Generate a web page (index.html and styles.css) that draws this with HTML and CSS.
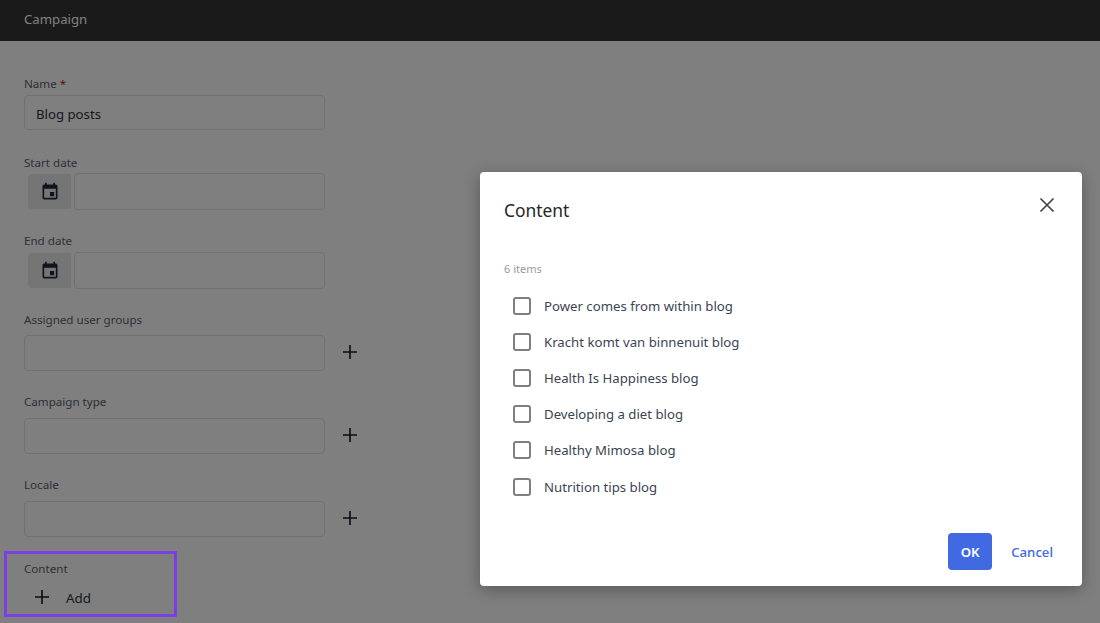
FILE: index.html
```html
<!DOCTYPE html>
<html lang="en">
<head>
<meta charset="utf-8">
<title>Campaign</title>
<link rel="stylesheet" href="styles.css">
</head>
<body>
<header class="topbar">Campaign</header>
<main class="form">
  <div class="field field-name">
    <label class="label">Name <span class="req">*</span></label>
    <div class="input input-name">Blog posts</div>
  </div>
  <div class="field field-date">
    <label class="label">Start date</label>
    <div class="date-row">
      <span class="date-btn"><svg width="20" height="20" viewBox="0 0 24 24"><path fill="#1f2a3a" d="M17 12h-5v5h5v-5zM16 1v2H8V1H6v2H5c-1.11 0-2 .9-2 2v14a2 2 0 0 0 2 2h14a2 2 0 0 0 2-2V5a2 2 0 0 0-2-2h-1V1h-2zm3 18H5V8h14v11z"/></svg></span>
      <div class="input input-date"></div>
    </div>
  </div>
  <div class="field field-date">
    <label class="label">End date</label>
    <div class="date-row">
      <span class="date-btn"><svg width="20" height="20" viewBox="0 0 24 24"><path fill="#1f2a3a" d="M17 12h-5v5h5v-5zM16 1v2H8V1H6v2H5c-1.11 0-2 .9-2 2v14a2 2 0 0 0 2 2h14a2 2 0 0 0 2-2V5a2 2 0 0 0-2-2h-1V1h-2zm3 18H5V8h14v11z"/></svg></span>
      <div class="input input-date"></div>
    </div>
  </div>
  <div class="field field-plus">
    <label class="label">Assigned user groups</label>
    <div class="plus-row">
      <div class="input input-plus"></div>
      <svg class="plus" width="16" height="16" viewBox="0 0 16 16"><path d="M8 1v14M1 8h14" stroke="#111a28" stroke-width="1.6" fill="none"/></svg>
    </div>
  </div>
  <div class="field field-plus">
    <label class="label">Campaign type</label>
    <div class="plus-row">
      <div class="input input-plus"></div>
      <svg class="plus" width="16" height="16" viewBox="0 0 16 16"><path d="M8 1v14M1 8h14" stroke="#111a28" stroke-width="1.6" fill="none"/></svg>
    </div>
  </div>
  <div class="field field-plus">
    <label class="label">Locale</label>
    <div class="plus-row">
      <div class="input input-plus"></div>
      <svg class="plus" width="16" height="16" viewBox="0 0 16 16"><path d="M8 1v14M1 8h14" stroke="#111a28" stroke-width="1.6" fill="none"/></svg>
    </div>
  </div>
  <div class="field field-content">
    <label class="label">Content</label>
    <div class="add-row">
      <svg width="16" height="16" viewBox="0 0 16 16"><path d="M8 1v14M1 8h14" stroke="#111a28" stroke-width="1.6" fill="none"/></svg>
      <span class="add-text">Add</span>
    </div>
  </div>
</main>

<div class="overlay"></div>
<div class="highlight"></div>

<section class="dialog">
  <div class="dialog-head">
    <h2 class="dialog-title">Content</h2>
    <svg class="close" width="16" height="16" viewBox="0 0 16 16"><path d="M1.5 1.5l13 13M14.5 1.5l-13 13" stroke="#444" stroke-width="1.7" fill="none"/></svg>
  </div>
  <p class="count">6 items</p>
  <ul class="list">
    <li class="item"><span class="box"></span>Power comes from within blog</li>
    <li class="item"><span class="box"></span>Kracht komt van binnenuit blog</li>
    <li class="item"><span class="box"></span>Health Is Happiness blog</li>
    <li class="item"><span class="box"></span>Developing a diet blog</li>
    <li class="item"><span class="box"></span>Healthy Mimosa blog</li>
    <li class="item"><span class="box"></span>Nutrition tips blog</li>
  </ul>
  <div class="actions">
    <button class="ok">OK</button>
    <button class="cancel">Cancel</button>
  </div>
</section>
</body>
</html>
```
FILE: styles.css
```css
* { box-sizing: border-box; }
html, body { height: 100%; }
body {
  margin: 0;
  height: 623px;
  overflow: hidden;
  background: #fff;
  font-family: "Noto Sans", "Open Sans", sans-serif;
  color: #2a3342;
  position: relative;
}
.topbar {
  height: 41px;
  background: #343434;
  color: #fff;
  font-size: 13.2px;
  line-height: 39px;
  padding-left: 24px;
}
.form { padding: 34px 0 0 24px; }
.label {
  display: block;
  font-size: 11.6px;
  line-height: 18px;
  color: #5a6270;
}
.req { color: #c62828; }
.input {
  width: 301px;
  border: 1px solid #e2e2e2;
  border-radius: 4px;
  background: #fff;
}
.field-name .input { margin-top: 2px; }
.input-name {
  height: 35px;
  font-size: 13.2px;
  line-height: 35px;
  padding: 1px 0 0 11px;
  color: #2a3342;
}
.field-date { margin-top: 22px; }
.field-name + .field-date { margin-top: 24px; }
.date-row { display: flex; padding-left: 4px; height: 37px; margin-top: 1px; }
.field-date + .field-date .date-row { margin-top: 2px; }
.date-btn {
  width: 43px;
  height: 35px;
  margin-top: 1px;
  background: #ebebeb;
  border-radius: 4px 0 0 4px;
  display: flex;
  align-items: center;
  justify-content: center;
}
.input-date { width: 251px; margin-left: 3px; height: 37px; }
.field-plus { margin-top: 22px; }
.plus-row { display: flex; align-items: center; margin-top: 7px; }
.field-date + .field-plus .plus-row { margin-top: 6px; }
.input-plus { height: 36px; }
.plus { margin-left: 17px; margin-bottom: 2px; }
.field-content { margin-top: 23px; }
.add-row {
  display: flex;
  align-items: center;
  padding-left: 10px;
  margin-top: 7px;
  height: 24px;
}
.add-text { margin-left: 16px; padding-top: 2px; font-size: 13.4px; }
.overlay {
  position: absolute;
  inset: 0;
  background: rgba(0, 0, 0, 0.5);
}
.highlight {
  position: absolute;
  left: 4px;
  top: 551px;
  width: 173px;
  height: 66px;
  border: 3px solid #7b3fe4;
}
.dialog {
  position: absolute;
  left: 480px;
  top: 172px;
  width: 602px;
  height: 414px;
  background: #fff;
  border-radius: 4px;
  box-shadow: 0 4px 16px rgba(0, 0, 0, 0.3);
  padding: 0 24px;
}
.dialog-head {
  display: flex;
  justify-content: space-between;
  align-items: flex-start;
  padding-top: 25px;
}
.dialog-title {
  margin: 0;
  font-size: 17.4px;
  line-height: 26px;
  font-weight: 400;
  color: #262626;
}
.close { margin: 0 3px 0 0; }
.count {
  margin: 38px 0 0;
  font-size: 11px;
  line-height: 16px;
  color: #999;
}
.list { list-style: none; margin: 11px 0 0; padding: 0 0 0 9px; }
.item {
  display: flex;
  align-items: center;
  height: 36.1px;
  font-size: 13.2px;
  color: #3b4452;
}
.box {
  width: 18px;
  height: 18px;
  border: 2px solid #7f7f7f;
  border-radius: 3px;
  margin-right: 13px;
  background: #fff;
}
.actions {
  position: absolute;
  right: 29px;
  top: 361px;
  display: flex;
  align-items: center;
  gap: 19px;
}
.ok {
  width: 44px;
  height: 37px;
  border: 0;
  border-radius: 4px;
  background: #4169e1;
  color: #fff;
  font: 600 13.2px "Noto Sans", sans-serif;
  padding: 0;
}
.cancel {
  border: 0;
  background: none;
  color: #4169e1;
  font: 500 13.2px "Noto Sans", sans-serif;
  padding: 0;
}
```
